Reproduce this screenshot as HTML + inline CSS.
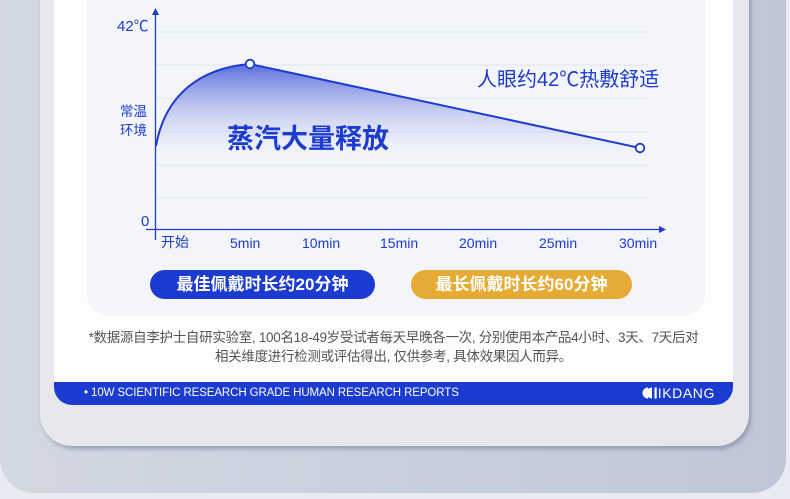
<!DOCTYPE html>
<html><head><meta charset="utf-8"><style>
*{margin:0;padding:0;box-sizing:border-box}
body{width:790px;height:499px;overflow:hidden;background:#e8ebf2;position:relative;font-family:"Liberation Sans","Noto Sans CJK SC",sans-serif}
.outer{position:absolute;left:0;top:-40px;width:786px;height:533px;border-radius:0 0 34px 34px;background:linear-gradient(90deg,#d3d8e3,#bfc7d7)}
.frame{position:absolute;left:40px;top:-40px;width:709px;height:486px;border-radius:0 0 32px 32px;background:#e7e8ed;box-shadow:2px 3px 4px rgba(90,100,130,.45)}
.card{position:absolute;left:54px;top:-40px;width:679px;height:445px;border-radius:0 0 18px 18px;background:#fdfdfe;overflow:hidden}
.band{position:absolute;left:0;bottom:0;width:100%;height:23px;background:#1c3bd0;color:#fff}
.band .t{position:absolute;left:30px;top:5px;font-size:11.5px;letter-spacing:-0.1px;white-space:nowrap}
.band .l{position:absolute;right:18px;top:3px;font-size:14px;letter-spacing:0.6px}
.panel{position:absolute;left:33px;top:0;width:618px;height:356px;border-radius:0 0 22px 22px;background:#f4f5f9}
.note{position:absolute;left:0;width:100%;text-align:center;font-size:13.5px;color:#555;top:368px;line-height:19px;letter-spacing:-0.3px}
.pill{position:absolute;top:310px;height:29px;border-radius:15px;color:#fff;font-weight:bold;font-size:17px;text-align:center;line-height:29px}
</style></head><body>
<div class="outer"></div>
<div class="frame"></div>
<div class="card">
  <div class="panel"></div>
  <div class="pill" style="left:96px;width:225px;background:#1c3bd0">最佳佩戴时长约20分钟</div>
  <div class="pill" style="left:357px;width:221px;background:#e5ab34">最长佩戴时长约60分钟</div>
  <div class="note">*数据源自李护士自研实验室, 100名18-49岁受试者每天早晚各一次, 分别使用本产品4小时、3天、7天后对<br>相关维度进行检测或评估得出, 仅供参考, 具体效果因人而异。</div>
  <div class="band"><div class="t">• 10W SCIENTIFIC RESEARCH GRADE HUMAN RESEARCH REPORTS</div><div class="l"><svg width="16" height="12" viewBox="0 0 16 12" style="vertical-align:-1px"><path d="M6 0.5A5.5 5.5 0 0 0 6 11.5Z" fill="#fff"/><path d="M10 0.5A5.5 5.5 0 0 0 10 11.5Z" fill="#fff"/><rect x="12.5" y="0.5" width="2.2" height="11" fill="#fff"/></svg>IKDANG</div></div>
</div>
<svg style="position:absolute;left:0;top:0" width="790" height="499">
<defs><linearGradient id="g" x1="0" y1="0" x2="0" y2="1"><stop offset="0" stop-color="#3c55d6" stop-opacity=".85"/><stop offset=".8" stop-color="#c8cff2" stop-opacity=".25"/><stop offset="1" stop-color="#eef0fa" stop-opacity="0"/></linearGradient></defs>
<g stroke="#dfe3f3" stroke-width="1">
<line x1="156" y1="32" x2="648" y2="32"/><line x1="156" y1="65" x2="648" y2="65"/><line x1="156" y1="98" x2="648" y2="98"/><line x1="156" y1="132" x2="648" y2="132"/><line x1="156" y1="165" x2="648" y2="165"/><line x1="156" y1="198" x2="648" y2="198"/>
</g>
<path d="M156 146 C165 95 200 68 250 64 L640 148 L640 160 L156 160 Z" fill="url(#g)"/>
<path d="M156 146 C165 95 200 68 250 64 L640 148" fill="none" stroke="#1c3bd0" stroke-width="2"/>
<line x1="155.5" y1="14" x2="155.5" y2="240" stroke="#1c3bd0" stroke-width="1.3"/>
<path d="M152 15 L155.5 8 L159 15Z" fill="#1c3bd0"/>
<line x1="146" y1="229.5" x2="660" y2="229.5" stroke="#1c3bd0" stroke-width="1.3"/>
<path d="M659 226 L666 229.5 L659 233Z" fill="#1c3bd0"/>
<circle cx="250" cy="64" r="4.3" fill="#fff" stroke="#1c3bd0" stroke-width="1.8"/>
<circle cx="640" cy="148" r="4.3" fill="#fff" stroke="#1c3bd0" stroke-width="1.8"/>
<g fill="#1c3bd0" font-family="Liberation Sans, Noto Sans CJK SC, sans-serif">
<text x="117" y="31" font-size="15">42℃</text>
<text x="120" y="116" font-size="13.5">常温</text>
<text x="120" y="135" font-size="13.5">环境</text>
<text x="141" y="226" font-size="15">0</text>
<text x="161" y="247" font-size="14">开始</text>
<text x="230" y="248" font-size="14">5min</text>
<text x="302" y="248" font-size="14">10min</text>
<text x="380" y="248" font-size="14">15min</text>
<text x="459" y="248" font-size="14">20min</text>
<text x="539" y="248" font-size="14">25min</text>
<text x="619" y="248" font-size="14">30min</text>
<text x="227" y="148" font-size="27" font-weight="bold">蒸汽大量释放</text>
<text x="477" y="86" font-size="20">人眼约42℃热敷舒适</text>
</g>
</svg>
</body></html>
